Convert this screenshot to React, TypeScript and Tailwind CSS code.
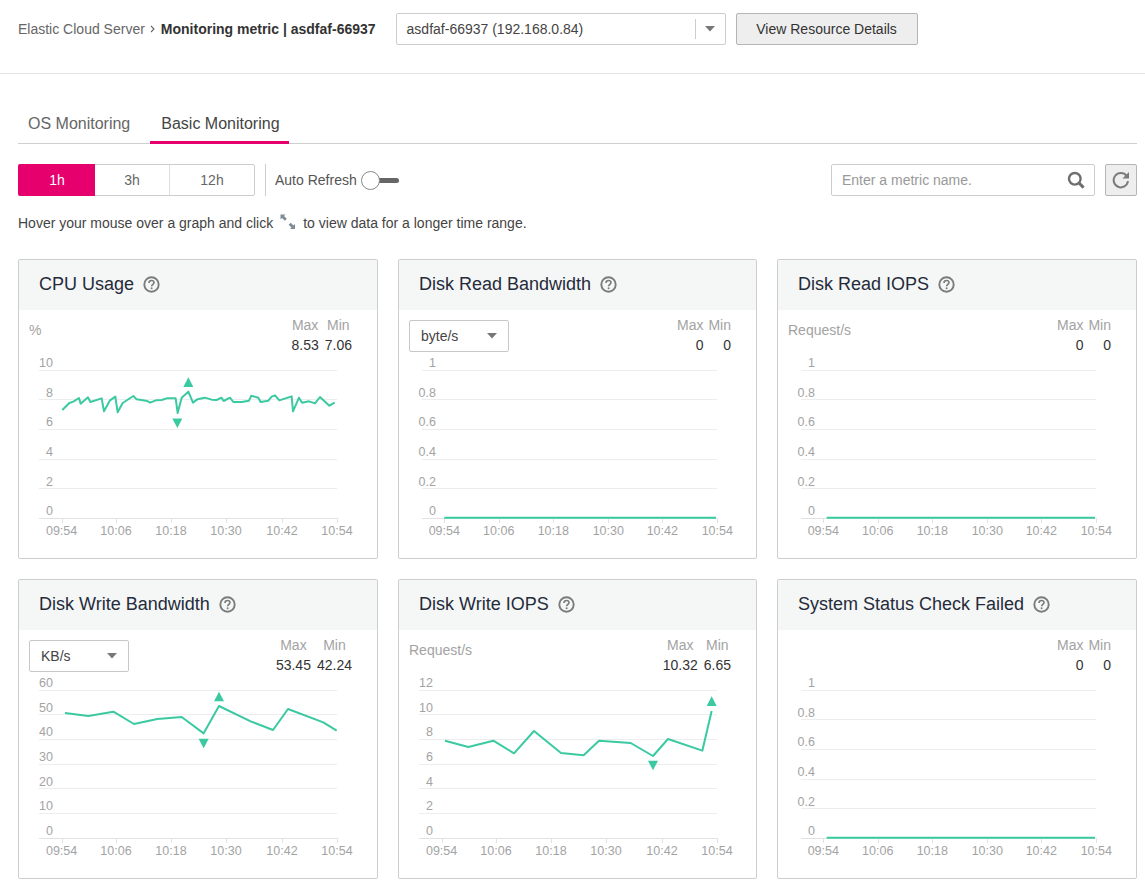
import React from "react";

const TEAL = "#3bc9a2";
type P = [number, number];
const map = (p: P): P => [p[0] / 3 - 8, p[1] / 3 - 4];

const Q = () => (
  <svg width="17" height="17" viewBox="0 0 17 17" fill="none" className="shrink-0">
    <circle cx="8.5" cy="8.5" r="7.2" stroke="#7b7b7b" strokeWidth="1.9" />
    <path d="M6 6.9C6 5.3 7.1 4.5 8.5 4.5C10 4.5 11 5.4 11 6.6C11 8.2 8.6 8.4 8.6 10.3" stroke="#7b7b7b" strokeWidth="1.6" />
    <circle cx="8.6" cy="12.3" r="1" fill="#7b7b7b" />
  </svg>
);

const Caret = () => (
  <svg width="10" height="6" viewBox="0 0 10 6"><path d="M0 0H10L5 5.5Z" fill="#777" /></svg>
);

type ChartProps = {
  w: number;
  labels: string[];
  labelY: number[];
  gridY: number[];
  gridX0: number;
  labelEnd: number;
  ticks: number[];
  line?: P[];
  flatStart?: number;
  up?: [number, number];
  down?: [number, number];
};

const TIMES = ["09:54", "10:06", "10:18", "10:30", "10:42", "10:54"];

function Chart({ w, labels, labelY, gridY, gridX0, labelEnd, ticks, line, flatStart, up, down }: ChartProps) {
  const pts = line ? line.map(map).map((p) => p.join(",")).join(" ") : null;
  const last = gridY[gridY.length - 1];
  return (
    <svg width={w - 2} height={203} viewBox={`1 96 ${w - 2} 203`} className="block">
      {gridY.map((y, i) => (
        <line key={i} x1={gridX0} x2={319} y1={y + 0.5} y2={y + 0.5} stroke={i === gridY.length - 1 ? "#e2e2e2" : "#ededed"} />
      ))}
      {ticks.map((x, i) => (
        <line key={i} x1={Math.round(x) + 0.5} x2={Math.round(x) + 0.5} y1={last} y2={last + 5} stroke="#e2e2e2" />
      ))}
      {labels.map((l, i) => (
        <text key={l} x={labelEnd} y={labelY[i]} textAnchor="end" className="fill-[#a3a3a3] text-[12.5px]">{l}</text>
      ))}
      {TIMES.map((t, i) => (
        <text key={t} x={ticks[i]} y={276} textAnchor="middle" className="fill-[#a3a3a3] text-[12.5px]">{t}</text>
      ))}
      {pts ? (
        <polyline points={pts} fill="none" stroke={TEAL} strokeWidth="2" strokeLinejoin="round" />
      ) : (
        <line x1={flatStart ?? ticks[0]} x2={318} y1={258.7} y2={258.7} stroke={TEAL} strokeWidth="2" />
      )}
      {up && <path d={`M${up[0] / 3 - 8} ${up[1] / 3 - 4}l5 9.6h-10Z`} fill={TEAL} />}
      {down && <path d={`M${down[0] / 3 - 8} ${down[1] / 3 - 4}l-5 -9.6h10Z`} fill={TEAL} />}
    </svg>
  );
}

type CardProps = {
  title: string;
  unit?: string;
  select?: string;
  max: string;
  min: string;
  w?: number;
} & Omit<ChartProps, "w">;

function Card({ title, unit, select, max, min, w = 360, ...chart }: CardProps) {
  const zero = max === "0";
  return (
    <div className="h-[300px] rounded-[2px] border border-[#cdcdcd] bg-white">
      <div className="flex h-[50px] items-center gap-[9px] bg-[#f5f7f7] pb-[2px] pl-[20px]">
        <span className="text-[18px] text-[#252b3a]">{title}</span>
        <Q />
      </div>
      <div className="flex h-[45px] items-start justify-between pl-[10px] pr-[25px]">
        {select ? (
          <div className="mt-[10px] flex h-[32px] w-[100px] items-center justify-between rounded-[2px] border border-[#c8c8c8] pl-[11px] pr-[11px] text-[14px] text-[#444]">
            {select}
            <Caret />
          </div>
        ) : (
          <div className="mt-[10px] text-[14px] leading-[20px] text-[#a3a3a3]">{unit}</div>
        )}
        <div className={`mt-[5px] grid grid-cols-[auto_auto] text-[14px] leading-[20px] ${zero ? "gap-x-[5px] text-right" : "gap-x-[6px] text-center"}`}>
          <span className="text-[#a3a3a3]">Max</span>
          <span className="text-[#a3a3a3]">Min</span>
          <span className="text-[#333]">{max}</span>
          <span className="text-[#333]">{min}</span>
        </div>
      </div>
      <Chart w={w} {...chart} />
    </div>
  );
}

const Y6 = [111, 140, 170, 200, 229, 259];
const L6 = [108, 138, 167, 197, 227, 256];
const Y7 = [111, 135, 160, 185, 209, 234, 259];
const L7 = [108, 133, 157, 182, 207, 231, 256];
const T1 = [43.6, 98, 153, 208, 264, 319];
const T2 = [46.3, 100.7, 155.3, 210.3, 264.3, 319.3];
const ZERO = ["1", "0.8", "0.6", "0.4", "0.2", "0"];
const zeroChart = { labels: ZERO, labelY: L6, gridY: Y6, gridX0: 24, labelEnd: 38, ticks: T2 };

const CPU: P[] = [[157,465],[178,444],[190,440],[207,429],[212,446],[234,427],[241,441],[275,430],[282,469],[300,436],[316,425],[323,472],[338,444],[370,423],[380,433],[412,438],[420,443],[438,436],[455,435],[470,430],[497,430],[503,474],[515,428],[535,410],[549,443],[562,433],[585,428],[605,434],[620,435],[634,428],[641,438],[660,428],[670,441],[695,441],[717,437],[724,422],[745,428],[752,441],[775,437],[785,425],[795,421],[808,436],[845,424],[849,469],[867,428],[876,443],[897,439],[915,445],[930,426],[958,452],[974,443]];
const DWB: P[] = [[165,414],[235,423],[310,410],[372,447],[442,432],[515,426],[581,475],[627,393],[722,439],[789,465],[834,402],[940,442],[980,467]];
const DWI: P[] = [[165,497],[235,516],[310,497],[372,535],[432,468],[513,534],[581,541],[627,497],[722,504],[789,543],[834,492],[937,527],[965,408]];

export default function App() {
  return (
    <div className="h-[885px] w-full overflow-hidden bg-white font-['Liberation_Sans',Arial,sans-serif] text-[14px] text-[#444]">
      <div className="flex h-[74px] items-start border-b border-[#e4e4e4] pl-[18px] pt-[13px]">
        <div className="flex h-[32px] items-center">
          <span className="text-[#666]">Elastic Cloud Server</span>
          <svg width="5" height="8" viewBox="0 0 5 8" className="ml-[5px] mr-[6px]"><path d="M1 1L4 4L1 7" fill="none" stroke="#666" strokeWidth="1.1" /></svg>
          <span className="font-bold text-[#333]">Monitoring metric | asdfaf-66937</span>
        </div>
        <div className="ml-[20px] flex h-[32px] w-[330px] items-center rounded-[2px] border border-[#cdcdcd] pl-[10px] text-[#444]">
          <span className="flex-1">asdfaf-66937 (192.168.0.84)</span>
          <span className="h-[20px] w-px bg-[#cdcdcd]" />
          <span className="flex w-[29px] justify-center"><Caret /></span>
        </div>
        <div className="ml-[10px] flex h-[32px] w-[182px] items-center justify-center rounded-[2px] border border-[#b5b5b5] bg-[#eeeeee] text-[#333]">
          View Resource Details
        </div>
      </div>

      <div className="pl-[18px] pr-[8px]">
        <div className="flex h-[70px] items-end border-b border-[#cfcfcf] text-[16px]">
          <div className="flex h-[40px] items-center pt-[2px] pl-[10px] pr-[10px] text-[#666]">OS Monitoring</div>
          <div className="-mb-px ml-[10px] flex h-[41px] items-center border-b-[3px] border-[#e6006e] pt-[3px] pl-[11px] pr-[9px] text-[#444]">Basic Monitoring</div>
        </div>

        <div className="mt-[20px] flex h-[32px] items-center">
          <div className="flex h-full w-[237px] rounded-[2px] border border-[#cdcdcd] text-[#666]">
            <div className="-my-px -ml-px flex w-[77px] items-center justify-center rounded-l-[2px] bg-[#e6006e] pl-[1px] text-white">1h</div>
            <div className="flex w-[75px] items-center justify-center border-r border-[#dedede]">3h</div>
            <div className="flex flex-1 items-center justify-center">12h</div>
          </div>
          <div className="ml-[10px] h-full w-px bg-[#cdcdcd]" />
          <span className="ml-[9px] text-[#555]">Auto Refresh</span>
          <div className="relative ml-[4px] h-[19px] w-[38px]">
            <div className="absolute left-[18px] top-[7px] h-[5px] w-[20px] rounded-r-full bg-[#666]" />
            <div className="absolute left-0 top-0 h-[19px] w-[19px] rounded-full border border-[#888] bg-white" />
          </div>
          <div className="ml-auto flex h-full w-[264px] items-center justify-between rounded-[2px] border border-[#cdcdcd] pl-[10px] pr-[9px] text-[#999]">
            Enter a metric name.
            <svg width="18" height="18" viewBox="0 0 18 18" fill="none">
              <circle cx="7.8" cy="7.8" r="5.8" stroke="#6e6e6e" strokeWidth="2.4" />
              <path d="M11.8 11.8L16.6 16.6" stroke="#6e6e6e" strokeWidth="3" />
            </svg>
          </div>
          <div className="ml-[10px] flex h-full w-[32px] items-center justify-center rounded-[2px] border border-[#b5b5b5] bg-[#eeeeee]">
            <svg width="20" height="20" viewBox="0 0 20 20" fill="none">
              <path d="M15.6 5.8A7.2 7.2 0 1 0 17 11.2" stroke="#7b7b7b" strokeWidth="2" />
              <path d="M18 2V8.6H11.4Z" fill="#7b7b7b" />
            </svg>
          </div>
        </div>

        <div className="mt-[17px] flex h-[20px] items-center text-[#444]">
          Hover your mouse over a graph and click
          <svg width="16" height="16" viewBox="0 0 16 16" className="ml-[7px] mr-[7px] -translate-y-[1px]">
            <path d="M0.5 0.5H5.5L4 2L6.8 4.8L4.8 6.8L2 4L0.5 5.5Z" fill="#7f8b96" />
            <path d="M15 15H10L11.5 13.5L8.7 10.7L10.7 8.7L13.5 11.5L15 10Z" fill="#7f8b96" />
          </svg>
          to view data for a longer time range.
        </div>

        <div className="mt-[26px] grid grid-cols-[360px_359px_360px] gap-[20px]">
          <Card title="CPU Usage" unit="%" max="8.53" min="7.06" labels={["10","8","6","4","2","0"]} labelY={L6} gridY={Y6} gridX0={21} labelEnd={35} ticks={T1} line={CPU} up={[535,367]} down={[502,519]} />
          <Card title="Disk Read Bandwidth" select="byte/s" max="0" min="0" w={359} {...zeroChart} />
          <Card title="Disk Read IOPS" unit="Request/s" max="0" min="0" flatStart={49.7} {...zeroChart} />
          <Card title="Disk Write Bandwidth" select="KB/s" max="53.45" min="42.24" labels={["60","50","40","30","20","10","0"]} labelY={L7} gridY={Y7} gridX0={21} labelEnd={35} ticks={T1} line={DWB} up={[627,350]} down={[581,520]} />
          <Card title="Disk Write IOPS" unit="Request/s" max="10.32" min="6.65" w={359} labels={["12","10","8","6","4","2","0"]} labelY={L7} gridY={Y7} gridX0={21} labelEnd={35} ticks={T1} line={DWI} up={[965,364]} down={[789,586]} />
          <Card title="System Status Check Failed" max="0" min="0" flatStart={49.7} {...zeroChart} />
        </div>
      </div>
    </div>
  );
}
